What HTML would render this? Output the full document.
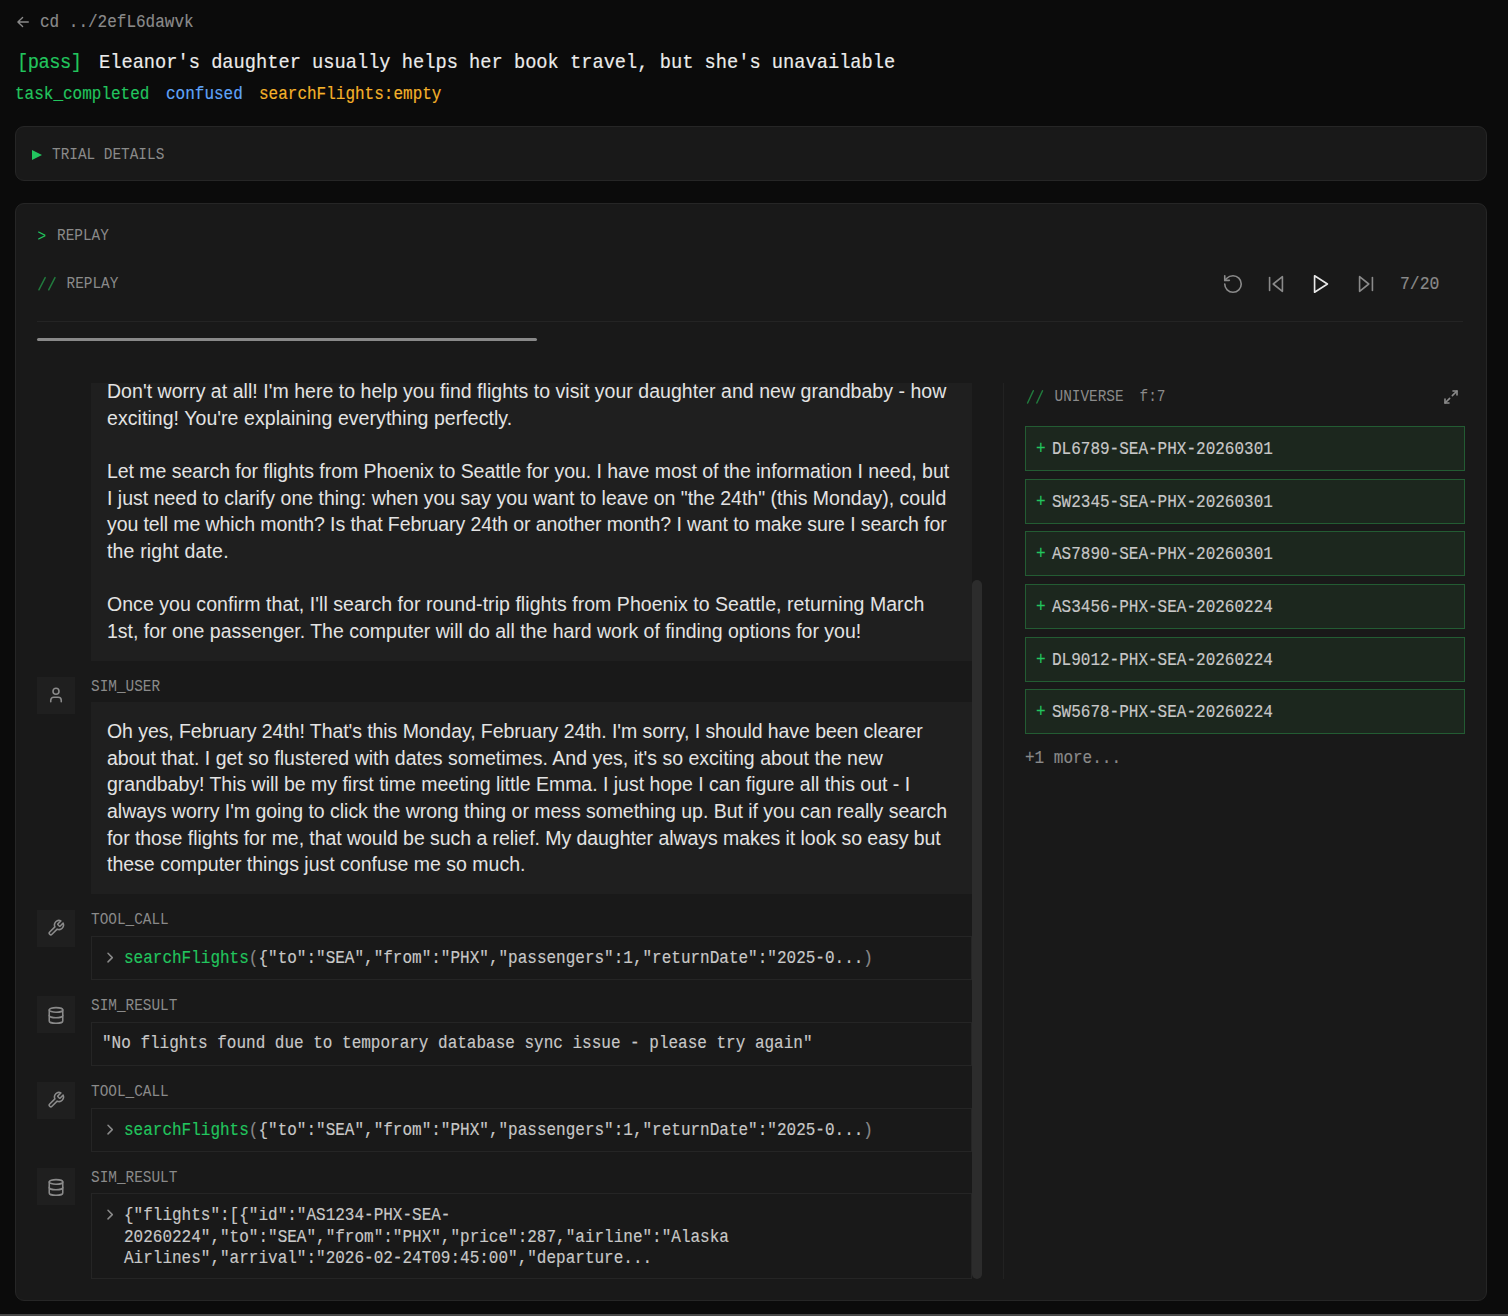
<!DOCTYPE html>
<html><head><meta charset="utf-8">
<style>
*{margin:0;padding:0;box-sizing:border-box}
html,body{width:1508px;height:1316px;overflow:hidden;background:#0b0b0b}
body{position:relative;font-family:"Liberation Mono",monospace;color:#e5e5e5}
.m,.lbl,.code{transform:scaleY(1.1)}
.m,.code{-webkit-text-stroke:0.15px currentColor}
.a{position:absolute;white-space:pre}
.m{font-family:"Liberation Mono",monospace}
.g{color:#22c55e}
.dim{color:#8a8a8a}
.panel{position:absolute;background:#191919;border:1px solid #262626;border-radius:9px}
.lbl{font-size:14.4px;line-height:16px;color:#8a8a8a}
.ibox{position:absolute;left:37px;width:38px;height:37px;background:#1f1f1f}
.ibox svg{position:absolute;left:10.2px;top:9px;width:18px;height:18px;fill:none;stroke:#8a8a8a;stroke-width:2.1;stroke-linecap:round;stroke-linejoin:round}
.bub{position:absolute;left:91px;width:881px;background:#1f1f1f}
.tb{position:absolute;left:91px;width:881px;background:#191919;border:1px solid #252525}
.body{font-family:"Liberation Sans",sans-serif;font-size:19.5px;line-height:26.7px;color:#e3e3e3}
.code{font-size:16px;color:#c8c8c8}
.uitem{position:absolute;left:1025px;width:440px;height:45px;background:#1c271e;border:1px solid #235c33}
</style></head><body>

<!-- header -->
<svg class="a" style="left:0;top:0" width="40" height="40" viewBox="0 0 40 40"><path d="M22.6 17.4L17.9 22L22.6 26.6M18.2 22H28.3" fill="none" stroke="#8a8a8a" stroke-width="1.35" stroke-linecap="round" stroke-linejoin="round"/></svg>
<div class="a m dim" style="left:40px;top:12.64px;transform-origin:0 14.26px;font-size:16px;line-height:20px">cd ../2efL6dawvk</div>
<div class="a m g" style="left:17px;top:52.01px;transform-origin:0 15.99px;font-size:18.75px;line-height:22px;letter-spacing:-0.5px">[pass]</div>
<div class="a m" style="left:99px;top:52.01px;transform-origin:0 15.99px;font-size:18.71px;line-height:22px;color:#ececec">Eleanor's daughter usually helps her book travel, but she's unavailable</div>
<div class="a m g" style="left:15px;top:85.04px;transform-origin:0 14.26px;font-size:16px;line-height:20px">task_completed</div>
<div class="a m" style="left:166px;top:85.04px;transform-origin:0 14.26px;font-size:16px;line-height:20px;color:#60a5fa">confused</div>
<div class="a m" style="left:259px;top:85.04px;transform-origin:0 14.26px;font-size:16px;line-height:20px;color:#f5b22a">searchFlights:empty</div>

<!-- trial details -->
<div class="panel" style="left:15px;top:126px;width:1472px;height:55px"></div>
<svg class="a" style="left:32px;top:150px" width="10" height="10" viewBox="0 0 10 10"><path d="M0 0L10 5L0 10Z" fill="#22c55e"/></svg>
<div class="a lbl" style="left:52px;top:146.67px;transform-origin:0 11.83px;">TRIAL DETAILS</div>

<!-- replay panel -->
<div class="panel" style="left:15px;top:203px;width:1472px;height:1098px"></div>
<div class="a lbl" style="left:37.5px;top:229.17px;transform-origin:0 11.83px;"><span class="g">&gt;</span></div>
<div class="a lbl" style="left:57px;top:228.47px;transform-origin:0 11.83px;">REPLAY</div>
<svg class="a" style="left:0;top:0;overflow:visible" width="1" height="1"><path d="M38.9 289.8L45.2 277.6M48.7 289.8L55 277.6" fill="none" stroke="#217a3d" stroke-width="1.5" stroke-linecap="round"/></svg>
<div class="a lbl" style="left:66.5px;top:276.17px;transform-origin:0 11.83px;">REPLAY</div>

<!-- controls -->
<svg class="a" style="left:1221.5px;top:272.5px" width="22" height="22" viewBox="0 0 24 24" fill="none" stroke="#8a8a8a" stroke-width="1.75" stroke-linecap="round" stroke-linejoin="round"><path d="M3 12a9 9 0 1 0 9-9 9.75 9.75 0 0 0-6.74 2.74L3 8"/><path d="M3 3v5h5"/></svg>
<svg class="a" style="left:1265px;top:272.5px" width="22" height="22" viewBox="0 0 24 24" fill="none" stroke="#8a8a8a" stroke-width="1.75" stroke-linecap="round" stroke-linejoin="round"><polygon points="19 20 9 12 19 4 19 20"/><line x1="5" y1="19" x2="5" y2="5"/></svg>
<svg class="a" style="left:1310px;top:272.5px" width="22" height="22" viewBox="0 0 24 24" fill="none" stroke="#e8e8e8" stroke-width="1.8" stroke-linecap="round" stroke-linejoin="round"><polygon points="5 3 19 12 5 21 5 3"/></svg>
<svg class="a" style="left:1355px;top:272.5px" width="22" height="22" viewBox="0 0 24 24" fill="none" stroke="#8a8a8a" stroke-width="1.75" stroke-linecap="round" stroke-linejoin="round"><polygon points="5 4 15 12 5 20 5 4"/><line x1="19" y1="5" x2="19" y2="19"/></svg>
<div class="a m dim" style="left:1400px;top:274.54px;transform-origin:0 14.36px;font-size:16.4px;line-height:20px">7/20</div>

<div class="a" style="left:37px;top:321px;width:1426px;height:1px;background:#242424"></div>
<div class="a" style="left:37px;top:338px;width:500px;height:3px;background:#898989;border-radius:2px"></div>

<!-- chat -->
<div class="bub" style="top:383px;height:278px"></div>
<div class="a body" style="left:107px;top:377.89px;letter-spacing:0.038px">Don't worry at all! I'm here to help you find flights to visit your daughter and new grandbaby - how</div>
<div class="a body" style="left:107px;top:404.59px;letter-spacing:0.060px">exciting! You're explaining everything perfectly.</div>
<div class="a body" style="left:107px;top:457.99px;letter-spacing:-0.044px">Let me search for flights from Phoenix to Seattle for you. I have most of the information I need, but</div>
<div class="a body" style="left:107px;top:484.69px;letter-spacing:0.005px">I just need to clarify one thing: when you say you want to leave on "the 24th" (this Monday), could</div>
<div class="a body" style="left:107px;top:511.39px;letter-spacing:-0.094px">you tell me which month? Is that February 24th or another month? I want to make sure I search for</div>
<div class="a body" style="left:107px;top:538.09px;letter-spacing:0.164px">the right date.</div>
<div class="a body" style="left:107px;top:591.49px;letter-spacing:0.052px">Once you confirm that, I'll search for round-trip flights from Phoenix to Seattle, returning March</div>
<div class="a body" style="left:107px;top:618.19px;letter-spacing:-0.011px">1st, for one passenger. The computer will do all the hard work of finding options for you!</div>

<div class="ibox" style="top:677px"><svg viewBox="0 0 24 24" preserveAspectRatio="none"><path d="M19 21v-2a4 4 0 0 0-4-4H9a4 4 0 0 0-4 4v2"/><circle cx="12" cy="7" r="4"/></svg></div>
<div class="a lbl" style="left:91px;top:679.47px;transform-origin:0 11.83px;">SIM_USER</div>
<div class="bub" style="top:702px;height:192px"></div>
<div class="a body" style="left:107px;top:717.89px;letter-spacing:-0.072px">Oh yes, February 24th! That's this Monday, February 24th. I'm sorry, I should have been clearer</div>
<div class="a body" style="left:107px;top:744.59px;letter-spacing:0.016px">about that. I get so flustered with dates sometimes. And yes, it's so exciting about the new</div>
<div class="a body" style="left:107px;top:771.29px;letter-spacing:-0.018px">grandbaby! This will be my first time meeting little Emma. I just hope I can figure all this out - I</div>
<div class="a body" style="left:107px;top:797.99px;letter-spacing:-0.026px">always worry I'm going to click the wrong thing or mess something up. But if you can really search</div>
<div class="a body" style="left:107px;top:824.69px;letter-spacing:-0.053px">for those flights for me, that would be such a relief. My daughter always makes it look so easy but</div>
<div class="a body" style="left:107px;top:851.39px;letter-spacing:0.002px">these computer things just confuse me so much.</div>

<div class="ibox" style="top:910px"><svg viewBox="0 0 24 24" preserveAspectRatio="none"><path d="M14.7 6.3a1 1 0 0 0 0 1.4l1.6 1.6a1 1 0 0 0 1.4 0l3.77-3.77a6 6 0 0 1-7.94 7.94l-6.91 6.91a2.12 2.12 0 0 1-3-3l6.91-6.91a6 6 0 0 1 7.94-7.94l-3.76 3.76z"/></svg></div>
<div class="a lbl" style="left:91px;top:912.27px;transform-origin:0 11.83px;">TOOL_CALL</div>
<div class="tb" style="top:936px;height:44px"></div>
<svg class="a" style="left:104px;top:952px" width="12" height="12" viewBox="0 0 12 12"><path d="M4 1.3l4.3 4.3L4 9.9" fill="none" stroke="#8a8a8a" stroke-width="1.5" stroke-linecap="round" stroke-linejoin="round"/></svg>
<div class="a code" style="left:124px;top:948.74px;transform-origin:0 14.26px;line-height:20px;"><span class="g">searchFlights</span><span class="dim">(</span>{"to":"SEA","from":"PHX","passengers":1,"returnDate":"2025-0...<span class="dim">)</span></div>

<div class="ibox" style="top:996px"><svg viewBox="0 0 24 24" preserveAspectRatio="none" style="top:9.8px;height:18.8px"><ellipse cx="12" cy="5" rx="9" ry="3"/><path d="M3 5V19A9 3 0 0 0 21 19V5"/><path d="M3 12A9 3 0 0 0 21 12"/></svg></div>
<div class="a lbl" style="left:91px;top:998.17px;transform-origin:0 11.83px;">SIM_RESULT</div>
<div class="tb" style="top:1022px;height:44px"></div>
<div class="a code" style="left:102px;top:1034.34px;transform-origin:0 14.26px;line-height:20px;">"No flights found due to temporary database sync issue - please try again"</div>

<div class="ibox" style="top:1082px"><svg viewBox="0 0 24 24" preserveAspectRatio="none"><path d="M14.7 6.3a1 1 0 0 0 0 1.4l1.6 1.6a1 1 0 0 0 1.4 0l3.77-3.77a6 6 0 0 1-7.94 7.94l-6.91 6.91a2.12 2.12 0 0 1-3-3l6.91-6.91a6 6 0 0 1 7.94-7.94l-3.76 3.76z"/></svg></div>
<div class="a lbl" style="left:91px;top:1084.37px;transform-origin:0 11.83px;">TOOL_CALL</div>
<div class="tb" style="top:1108px;height:44px"></div>
<svg class="a" style="left:104px;top:1124px" width="12" height="12" viewBox="0 0 12 12"><path d="M4 1.3l4.3 4.3L4 9.9" fill="none" stroke="#8a8a8a" stroke-width="1.5" stroke-linecap="round" stroke-linejoin="round"/></svg>
<div class="a code" style="left:124px;top:1120.74px;transform-origin:0 14.26px;line-height:20px;"><span class="g">searchFlights</span><span class="dim">(</span>{"to":"SEA","from":"PHX","passengers":1,"returnDate":"2025-0...<span class="dim">)</span></div>

<div class="ibox" style="top:1168px"><svg viewBox="0 0 24 24" preserveAspectRatio="none" style="top:9.8px;height:18.8px"><ellipse cx="12" cy="5" rx="9" ry="3"/><path d="M3 5V19A9 3 0 0 0 21 19V5"/><path d="M3 12A9 3 0 0 0 21 12"/></svg></div>
<div class="a lbl" style="left:91px;top:1169.97px;transform-origin:0 11.83px;">SIM_RESULT</div>
<div class="tb" style="top:1193px;height:86px"></div>
<svg class="a" style="left:104px;top:1209px" width="12" height="12" viewBox="0 0 12 12"><path d="M4 1.3l4.3 4.3L4 9.9" fill="none" stroke="#8a8a8a" stroke-width="1.5" stroke-linecap="round" stroke-linejoin="round"/></svg>
<div class="a code" style="left:124px;top:1206.57px;transform-origin:0 14.03px;line-height:19.545px;">{"flights":[{"id":"AS1234-PHX-SEA-
20260224","to":"SEA","from":"PHX","price":287,"airline":"Alaska
Airlines","arrival":"2026-02-24T09:45:00","departure...</div>

<div class="a" style="left:972px;top:580px;width:10px;height:699px;background:#2c2c2c;border-radius:5px"></div>

<!-- divider -->
<div class="a" style="left:1003px;top:383px;width:1px;height:896px;background:#222"></div>

<!-- universe -->
<svg class="a" style="left:0;top:0;overflow:visible" width="1" height="1"><path d="M1027.6 403L1033.3 390.7M1036.8 403L1042.5 390.7" fill="none" stroke="#217a3d" stroke-width="1.5" stroke-linecap="round"/></svg>
<div class="a lbl" style="left:1054.5px;top:389.27px;transform-origin:0 11.83px;">UNIVERSE</div>
<div class="a lbl" style="left:1139.5px;top:389.27px;transform-origin:0 11.83px;">f:7</div>
<svg class="a" style="left:1443px;top:389px" width="16" height="16" viewBox="0 0 24 24" fill="none" stroke="#8a8a8a" stroke-width="2.4" stroke-linecap="round" stroke-linejoin="round"><polyline points="15 3 21 3 21 9"/><polyline points="9 21 3 21 3 15"/><line x1="21" y1="3" x2="14" y2="10"/><line x1="3" y1="21" x2="10" y2="14"/></svg>
<div class="uitem" style="top:426.00px"></div>
<div class="a m" style="left:1036px;top:439.94px;transform-origin:0 14.26px;font-size:16px;line-height:20px;color:#22c55e">+</div>
<div class="a m" style="left:1052px;top:439.94px;transform-origin:0 14.26px;font-size:16px;line-height:20px;color:#c8c8c8">DL6789-SEA-PHX-20260301</div>
<div class="uitem" style="top:478.64px"></div>
<div class="a m" style="left:1036px;top:492.58px;transform-origin:0 14.26px;font-size:16px;line-height:20px;color:#22c55e">+</div>
<div class="a m" style="left:1052px;top:492.58px;transform-origin:0 14.26px;font-size:16px;line-height:20px;color:#c8c8c8">SW2345-SEA-PHX-20260301</div>
<div class="uitem" style="top:531.28px"></div>
<div class="a m" style="left:1036px;top:545.22px;transform-origin:0 14.26px;font-size:16px;line-height:20px;color:#22c55e">+</div>
<div class="a m" style="left:1052px;top:545.22px;transform-origin:0 14.26px;font-size:16px;line-height:20px;color:#c8c8c8">AS7890-SEA-PHX-20260301</div>
<div class="uitem" style="top:583.92px"></div>
<div class="a m" style="left:1036px;top:597.86px;transform-origin:0 14.26px;font-size:16px;line-height:20px;color:#22c55e">+</div>
<div class="a m" style="left:1052px;top:597.86px;transform-origin:0 14.26px;font-size:16px;line-height:20px;color:#c8c8c8">AS3456-PHX-SEA-20260224</div>
<div class="uitem" style="top:636.56px"></div>
<div class="a m" style="left:1036px;top:650.50px;transform-origin:0 14.26px;font-size:16px;line-height:20px;color:#22c55e">+</div>
<div class="a m" style="left:1052px;top:650.50px;transform-origin:0 14.26px;font-size:16px;line-height:20px;color:#c8c8c8">DL9012-PHX-SEA-20260224</div>
<div class="uitem" style="top:689.20px"></div>
<div class="a m" style="left:1036px;top:703.14px;transform-origin:0 14.26px;font-size:16px;line-height:20px;color:#22c55e">+</div>
<div class="a m" style="left:1052px;top:703.14px;transform-origin:0 14.26px;font-size:16px;line-height:20px;color:#c8c8c8">SW5678-PHX-SEA-20260224</div>
<div class="a m dim" style="left:1025px;top:748.84px;transform-origin:0 14.26px;font-size:16px;line-height:20px">+1 more...</div>

<div class="a" style="left:0;top:1314px;width:1508px;height:2px;background:#464646"></div>
</body></html>
